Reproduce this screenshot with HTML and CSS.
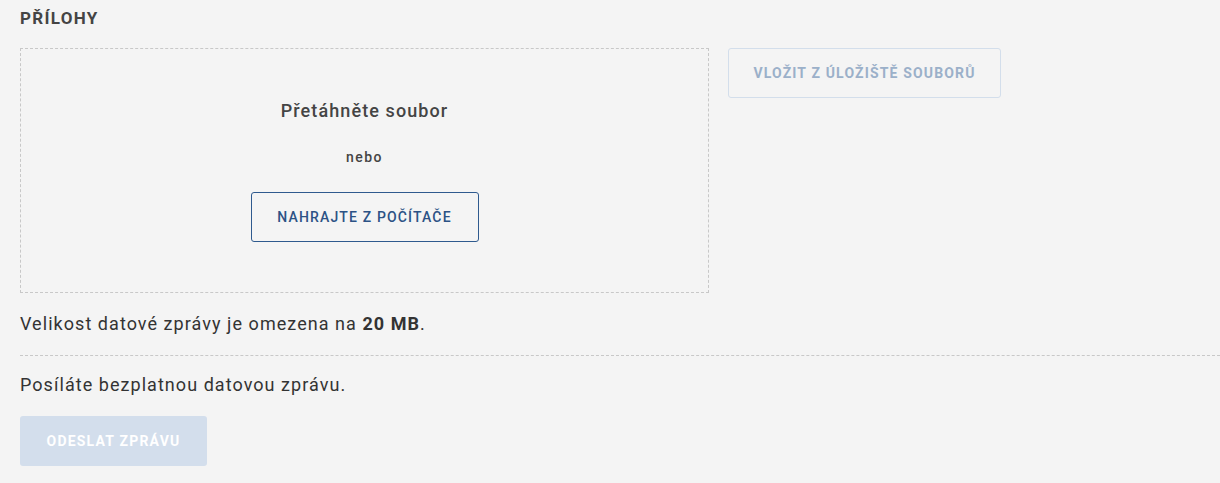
FILE: index.html
```html
<!DOCTYPE html>
<html lang="cs">
<head>
<meta charset="utf-8">
<link rel="stylesheet" href="styles.css">
</head>
<body>
<section class="attachments">
  <h2 class="title">PŘÍLOHY</h2>
  <div class="upload-row">
    <div class="dropzone">
      <div class="drop-title">Přetáhněte soubor</div>
      <div class="drop-or">nebo</div>
      <button class="btn-outline">NAHRAJTE Z POČÍTAČE</button>
    </div>
    <button class="btn-storage">VLOŽIT Z ÚLOŽIŠTĚ SOUBORŮ</button>
  </div>
  <p class="limit">Velikost datové zprávy je omezena na <strong>20 MB</strong>.</p>
  <hr class="sep">
  <p class="free">Posíláte bezplatnou datovou zprávu.</p>
  <button class="btn-send">ODESLAT ZPRÁVU</button>
</section>
</body>
</html>
```
FILE: styles.css
```css
html, body {
  margin: 0;
  padding: 0;
  background: #f4f4f4;
  font-family: Roboto, "Noto Sans", sans-serif;
  color: #333;
}
.attachments {
  padding: 7px 0 0 20px;
}
.title {
  margin: 0;
  font-size: 17px;
  font-weight: 700;
  letter-spacing: 1.3px;
  color: #444;
  line-height: 22px;
}
.upload-row {
  display: flex;
  align-items: flex-start;
  gap: 19px;
  margin-top: 19px;
}
.dropzone {
  box-sizing: border-box;
  width: 689px;
  height: 245px;
  border: 1px dashed #c8c8c8;
  display: flex;
  flex-direction: column;
  align-items: center;
  padding-top: 51px;
}
.drop-title {
  font-size: 18px;
  font-weight: 500;
  letter-spacing: 1.1px;
  color: #444;
  line-height: 22px;
}
.drop-or {
  margin-top: 26px;
  font-size: 14px;
  font-weight: 500;
  letter-spacing: 1.5px;
  color: #444;
  line-height: 18px;
}
.btn-outline {
  margin-top: 26px;
  box-sizing: border-box;
  width: 228px;
  height: 50px;
  background: transparent;
  border: 1px solid #2f5a8e;
  border-radius: 3px;
  color: #2c5285;
  font-family: Roboto, sans-serif;
  font-size: 14px;
  font-weight: 500;
  letter-spacing: 1.15px;
  cursor: pointer;
}
.btn-storage {
  box-sizing: border-box;
  width: 273px;
  height: 50px;
  background: transparent;
  border: 1px solid #d3deeb;
  border-radius: 3px;
  color: #9bb0c9;
  font-family: Roboto, sans-serif;
  font-size: 14px;
  font-weight: 700;
  letter-spacing: 1.15px;
}
.limit {
  margin: 20px 0 0;
  font-size: 18px;
  letter-spacing: 1.05px;
  line-height: 22px;
  color: #333;
}
.limit strong {
  font-weight: 700;
}
.sep {
  margin: 20px 0 0;
  border: 0;
  border-top: 1px dashed #c8c8c8;
  height: 0;
}
.free {
  margin: 18px 0 0;
  font-size: 18px;
  letter-spacing: 1.05px;
  line-height: 22px;
  color: #333;
}
.btn-send {
  margin-top: 20px;
  box-sizing: border-box;
  width: 187px;
  height: 50px;
  background: #d3deec;
  border: 0;
  border-radius: 3px;
  color: #fff;
  font-family: Roboto, sans-serif;
  font-size: 14px;
  font-weight: 700;
  letter-spacing: 1.2px;
}
```
